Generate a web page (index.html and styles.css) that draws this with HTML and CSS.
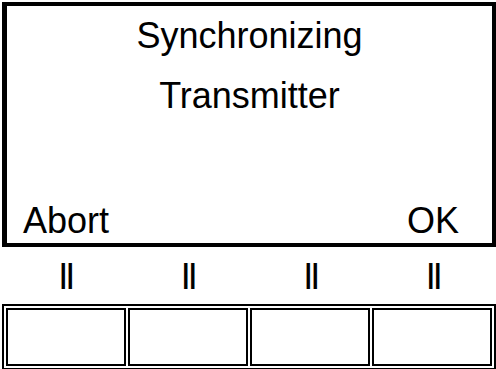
FILE: index.html
```html
<!DOCTYPE html>
<html>
  <head>
    <meta charset="utf-8"/>
    <link rel="stylesheet" href="styles.css">
  </head>
  <body>
    <div id="screen">
      <div id="message">
        <div class="line">Synchronizing</div>
        <div class="line">Transmitter</div>
      </div>
      <div id="softkeys">
        <span>Abort</span>
        <span>OK</span>
      </div>
    </div>

    <div id="labels">
      <span>II</span>
      <span>II</span>
      <span>II</span>
      <span>II</span>
    </div>

    <table class="keys">
      <tr>
        <td></td>
        <td></td>
        <td></td>
        <td></td>
      </tr>
    </table>
  </body>
</html>
```

FILE: styles.css
```css
html, body {
  margin: 0;
  padding: 0;
  background-color: #fff;
}
body {
  font-family: "Liberation Sans", Arial, sans-serif;
  font-size: 36px;
  color: #000;
  width: 496px;
  overflow: hidden;
}
#screen {
  box-sizing: border-box;
  margin: 2px 0 0 2px;
  width: 494px;
  height: 245px;
  border: 4px solid #000;
  border-left-width: 5px;
  display: flex;
  flex-direction: column;
  justify-content: space-between;
}
#message {
  text-align: center;
}
.line {
  line-height: 60px;
}
#softkeys {
  display: flex;
  justify-content: space-between;
  padding: 0 33px 2px 16px;
  line-height: 40px;
}
#labels {
  display: grid;
  grid-template-columns: repeat(4, 1fr);
  padding: 0 2px 0 4px;
  margin-top: 10px;
  height: 47px;
  line-height: 40px;
  text-align: center;
}
#labels span {
  letter-spacing: -3px;
}
table.keys {
  margin-left: 2px;
  width: 494px;
  border: 2px solid #000;
  border-collapse: separate;
  border-spacing: 2px;
}
table.keys td {
  height: 54px;
  padding: 0;
  border: 2px solid #000;
}
```
